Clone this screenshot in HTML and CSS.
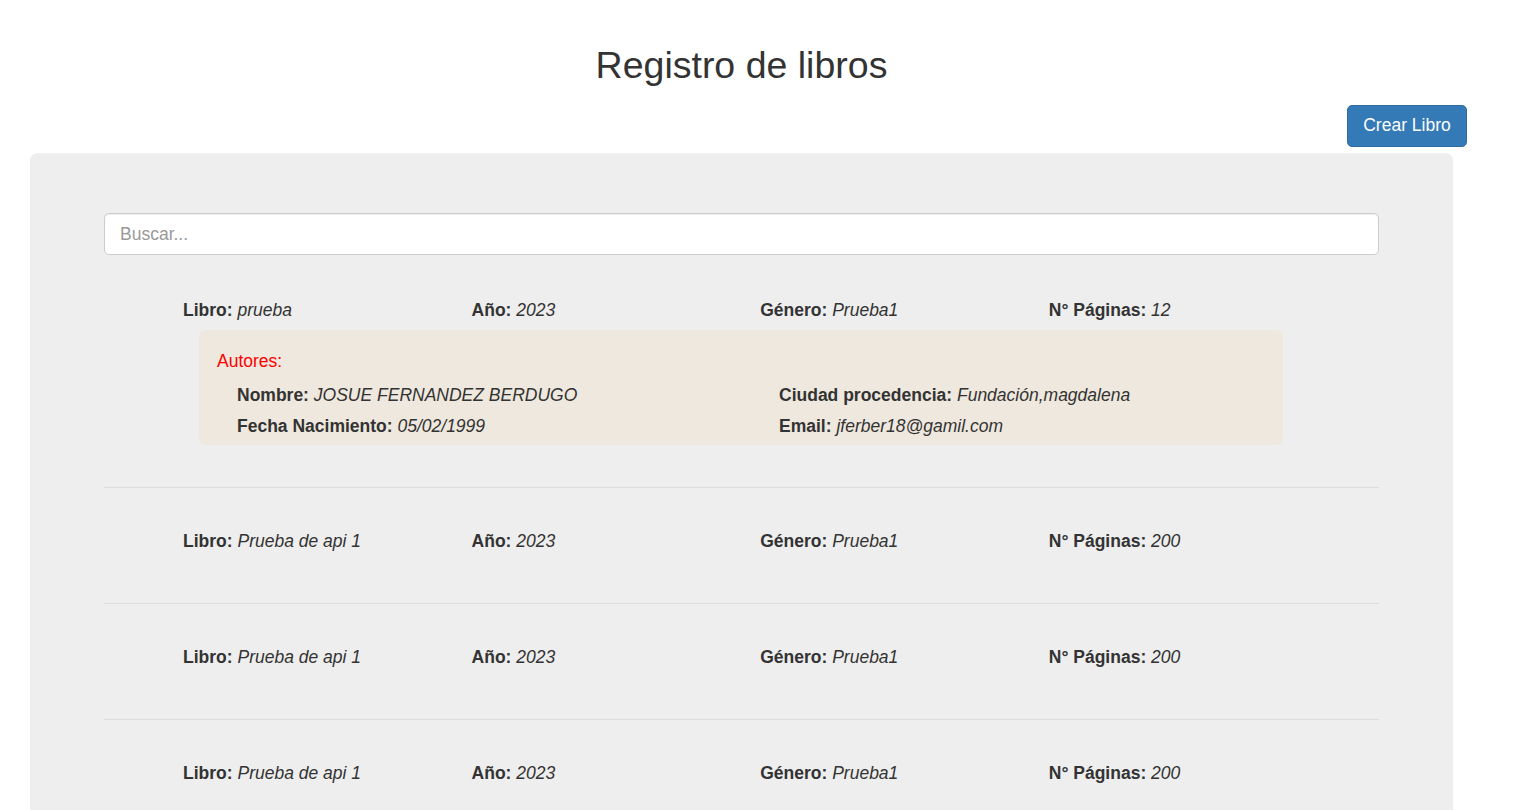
FILE: index.html
```html
<!DOCTYPE html>
<html lang="es">
<head>
<meta charset="utf-8">
<title>Registro de libros</title>
<link rel="stylesheet" href="styles.css">
</head>
<body>
<div class="page">
  <h2 class="title">Registro de libros</h2>
  <div class="actions">
    <button class="btn-primary" type="button">Crear Libro</button>
  </div>
  <div class="jumbotron">
    <input class="search" type="text" placeholder="Buscar...">
    <div class="book book-first">
      <div class="book-row">
        <div class="cell"><b>Libro:</b> <i>prueba</i></div>
        <div class="cell"><b>Año:</b> <i>2023</i></div>
        <div class="cell"><b>Género:</b> <i>Prueba1</i></div>
        <div class="cell"><b>N° Páginas:</b> <i>12</i></div>
      </div>
      <div class="authors">
        <div class="authors-label">Autores:</div>
        <div class="authors-grid">
          <div class="a-cell"><b>Nombre:</b> <i>JOSUE FERNANDEZ BERDUGO</i></div>
          <div class="a-cell"><b>Ciudad procedencia:</b> <i>Fundación,magdalena</i></div>
          <div class="a-cell"><b>Fecha Nacimiento:</b> <i>05/02/1999</i></div>
          <div class="a-cell"><b>Email:</b> <i>jferber18@gamil.com</i></div>
        </div>
      </div>
    </div>
    <div class="book">
      <div class="book-row">
        <div class="cell"><b>Libro:</b> <i>Prueba de api 1</i></div>
        <div class="cell"><b>Año:</b> <i>2023</i></div>
        <div class="cell"><b>Género:</b> <i>Prueba1</i></div>
        <div class="cell"><b>N° Páginas:</b> <i>200</i></div>
      </div>
    </div>
    <div class="book">
      <div class="book-row">
        <div class="cell"><b>Libro:</b> <i>Prueba de api 1</i></div>
        <div class="cell"><b>Año:</b> <i>2023</i></div>
        <div class="cell"><b>Género:</b> <i>Prueba1</i></div>
        <div class="cell"><b>N° Páginas:</b> <i>200</i></div>
      </div>
    </div>
    <div class="book">
      <div class="book-row">
        <div class="cell"><b>Libro:</b> <i>Prueba de api 1</i></div>
        <div class="cell"><b>Año:</b> <i>2023</i></div>
        <div class="cell"><b>Género:</b> <i>Prueba1</i></div>
        <div class="cell"><b>N° Páginas:</b> <i>200</i></div>
      </div>
    </div>
  </div>
</div>
</body>
</html>
```

FILE: styles.css
```css
html, body {
  margin: 0;
  padding: 0;
  background: #fff;
}
body {
  font-family: "Liberation Sans", Arial, Helvetica, sans-serif;
  font-size: 17.5px;
  line-height: 25px;
  color: #333;
}
.page {
  width: 1423px;
  margin-left: 30px;
}
.title {
  margin: 45px 0 0;
  font-size: 37.5px;
  line-height: 41px;
  font-weight: 500;
  text-align: center;
  color: #333;
}
.actions {
  display: flex;
  justify-content: flex-end;
  margin: 19px -14px 6px 0;
}
.btn-primary {
  font-family: inherit;
  font-size: 17.5px;
  line-height: 25px;
  padding: 7px 15px 8px;
  height: 42px;
  width: 120px;
  color: #fff;
  background: #337ab7;
  border: 1px solid #2e6da4;
  border-radius: 5px;
  cursor: pointer;
}
.jumbotron {
  background: #eee;
  border-radius: 7.5px;
  padding: 60px 74px 60px 74px;
  min-height: 700px;
}
.search {
  display: block;
  box-sizing: border-box;
  width: 100%;
  height: 42px;
  padding: 0 15px;
  font-family: inherit;
  font-size: 17.5px;
  color: #555;
  background: #fff;
  border: 1px solid #ccc;
  border-radius: 5px;
  box-shadow: inset 0 1px 1px rgba(0, 0, 0, 0.075);
  outline: none;
}
.search::placeholder {
  color: #999;
}
.book {
  padding: 41px 0 41px;
  border-bottom: 1px solid #ddd;
}
.book-first {
  padding-top: 43px;
  padding-bottom: 42px;
}
.book-row {
  display: grid;
  grid-template-columns: repeat(4, 288.6px);
  padding-left: 79px;
  margin-bottom: 8px;
}
.book-first .book-row {
  margin-bottom: 7px;
}
.cell, .a-cell {
  white-space: nowrap;
}
.cell b, .a-cell b {
  font-weight: 700;
}
.authors {
  margin-left: 95px;
  width: 1084px;
  background: #efe8de;
  border-radius: 6px;
  padding: 19px 0 6px;
}
.authors-label {
  color: #f00;
  padding-left: 18px;
  margin-bottom: 9px;
}
.authors-grid {
  display: grid;
  grid-template-columns: 1fr 1fr;
  row-gap: 6px;
}
.a-cell {
  padding-left: 38px;
}
```
